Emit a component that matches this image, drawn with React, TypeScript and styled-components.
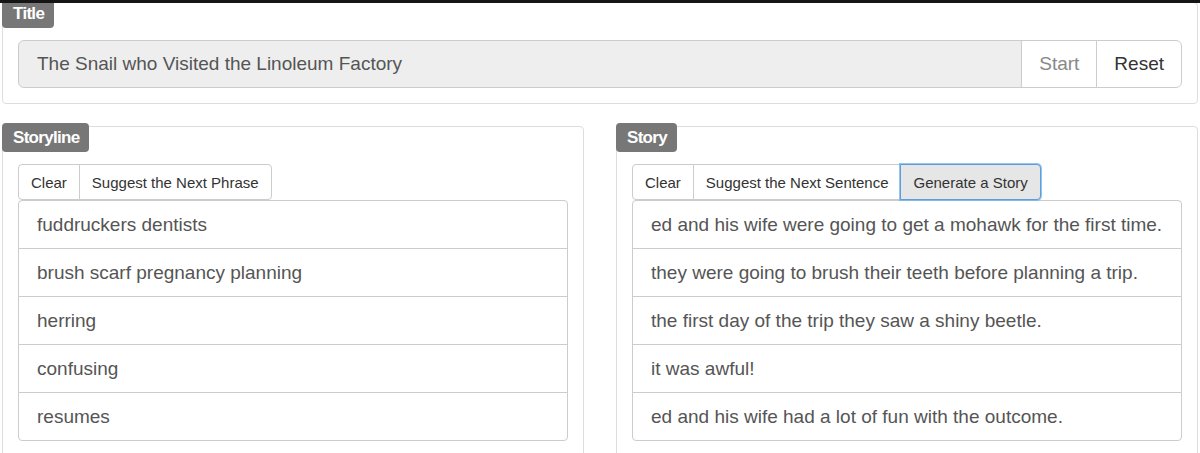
import React from "react";
import styled, { createGlobalStyle } from "styled-components";

const GlobalStyle = createGlobalStyle`
    html, body {
        margin: 0;
        padding: 0;
        background: #fff;
    }
    body {
        font-family: "Liberation Sans", Arial, sans-serif;
        color: #333;
    }
    * {
        box-sizing: border-box;
    }
`;

const phrases = [
    "fuddruckers dentists",
    "brush scarf pregnancy planning",
    "herring",
    "confusing",
    "resumes",
];

const sentences = [
    "ed and his wife were going to get a mohawk for the first time.",
    "they were going to brush their teeth before planning a trip.",
    "the first day of the trip they saw a shiny beetle.",
    "it was awful!",
    "ed and his wife had a lot of fun with the outcome.",
];

/** ------------------------------------------------------------- */
/** 스토리 생성 화면 */
/** ------------------------------------------------------------- */
const App = () => {
    return (
        <>
            <GlobalStyle />
            <TopBar />
            <Page>
                <Panel>
                    <Badge>Title</Badge>
                    <InputGroup>
                        <TitleInput>The Snail who Visited the Linoleum Factory</TitleInput>
                        <AddonButton muted>Start</AddonButton>
                        <AddonButton last>Reset</AddonButton>
                    </InputGroup>
                </Panel>
                <Columns>
                    <Panel>
                        <Badge>Storyline</Badge>
                        <ButtonGroup>
                            <GroupButton>Clear</GroupButton>
                            <GroupButton>Suggest the Next Phrase</GroupButton>
                        </ButtonGroup>
                        <List>
                            {phrases.map((p, idx) => (
                                <Item key={idx}>{p}</Item>
                            ))}
                        </List>
                    </Panel>
                    <Panel>
                        <Badge>Story</Badge>
                        <ButtonGroup>
                            <GroupButton>Clear</GroupButton>
                            <GroupButton>Suggest the Next Sentence</GroupButton>
                            <GroupButton active>Generate a Story</GroupButton>
                        </ButtonGroup>
                        <List>
                            {sentences.map((s, idx) => (
                                <Item key={idx}>{s}</Item>
                            ))}
                        </List>
                    </Panel>
                </Columns>
            </Page>
        </>
    );
};

export default App;

const TopBar = styled.div`
    position: relative;
    z-index: 1;
    height: 3px;
    background-color: #151515;
`;

const Page = styled.div`
    display: flex;
    flex-direction: column;
    gap: 22px;
    margin-top: -1px;
    padding: 0 2px 0 2px;
`;

const Columns = styled.div`
    display: grid;
    grid-template-columns: 1fr 1fr;
    gap: 32px;
`;

const Panel = styled.div`
    display: flex;
    flex-direction: column;
    align-items: stretch;
    padding: 0 15px 15px 15px;
    border: 1px solid #ddd;
    border-radius: 4px;
    background-color: #fff;
`;

const Badge = styled.div`
    align-self: flex-start;
    height: 29px;
    margin: -4px 0 12px -16px;
    padding: 0 10px 0 11px;
    border-radius: 4px;
    background-color: #777;

    color: #fff;
    font-size: 17px;
    font-weight: bold;
    letter-spacing: -0.7px;
    line-height: 29px;
`;

const InputGroup = styled.div`
    display: flex;
    height: 48px;
`;

const TitleInput = styled.div`
    flex: 1;
    display: flex;
    align-items: center;
    padding: 0 18px;
    border: 1px solid #ccc;
    border-radius: 6px 0 0 6px;
    background-color: #eee;

    color: #555;
    font-size: 19px;
`;

const AddonButton = styled.div<{ muted?: boolean; last?: boolean }>`
    display: flex;
    align-items: center;
    justify-content: center;
    padding: 0 17px;
    margin-left: -1px;
    border: 1px solid #ccc;
    border-radius: ${({ last }) => (last ? "0 6px 6px 0" : "0")};
    background-color: #fff;

    color: ${({ muted }) => (muted ? "#888" : "#333")};
    font-size: 19px;
`;

const ButtonGroup = styled.div`
    display: flex;
    align-self: flex-start;
    height: 36px;
`;

const GroupButton = styled.div<{ active?: boolean }>`
    display: flex;
    align-items: center;
    padding: 0 12px;
    margin-left: -1px;
    border: 1px solid ${({ active }) => (active ? "#5a9ee0" : "#ccc")};
    background-color: ${({ active }) => (active ? "#e6e6e6" : "#fff")};
    box-shadow: ${({ active }) => (active ? "0 0 0 1px rgba(102, 175, 233, 0.7)" : "none")};
    position: ${({ active }) => (active ? "relative" : "static")};

    color: #333;
    font-size: 15px;

    &:first-child {
        margin-left: 0;
        border-radius: 4px 0 0 4px;
    }
    &:last-child {
        border-radius: 0 4px 4px 0;
    }
`;

const List = styled.div`
    display: flex;
    flex-direction: column;
`;

const Item = styled.div`
    padding: 11px 18px;
    margin-bottom: -1px;
    border: 1px solid #ccc;
    background-color: #fff;

    color: #555;
    font-size: 19px;
    line-height: 25px;

    &:first-child {
        border-radius: 4px 4px 0 0;
    }
    &:last-child {
        margin-bottom: 0;
        border-radius: 0 0 4px 4px;
    }
`;
